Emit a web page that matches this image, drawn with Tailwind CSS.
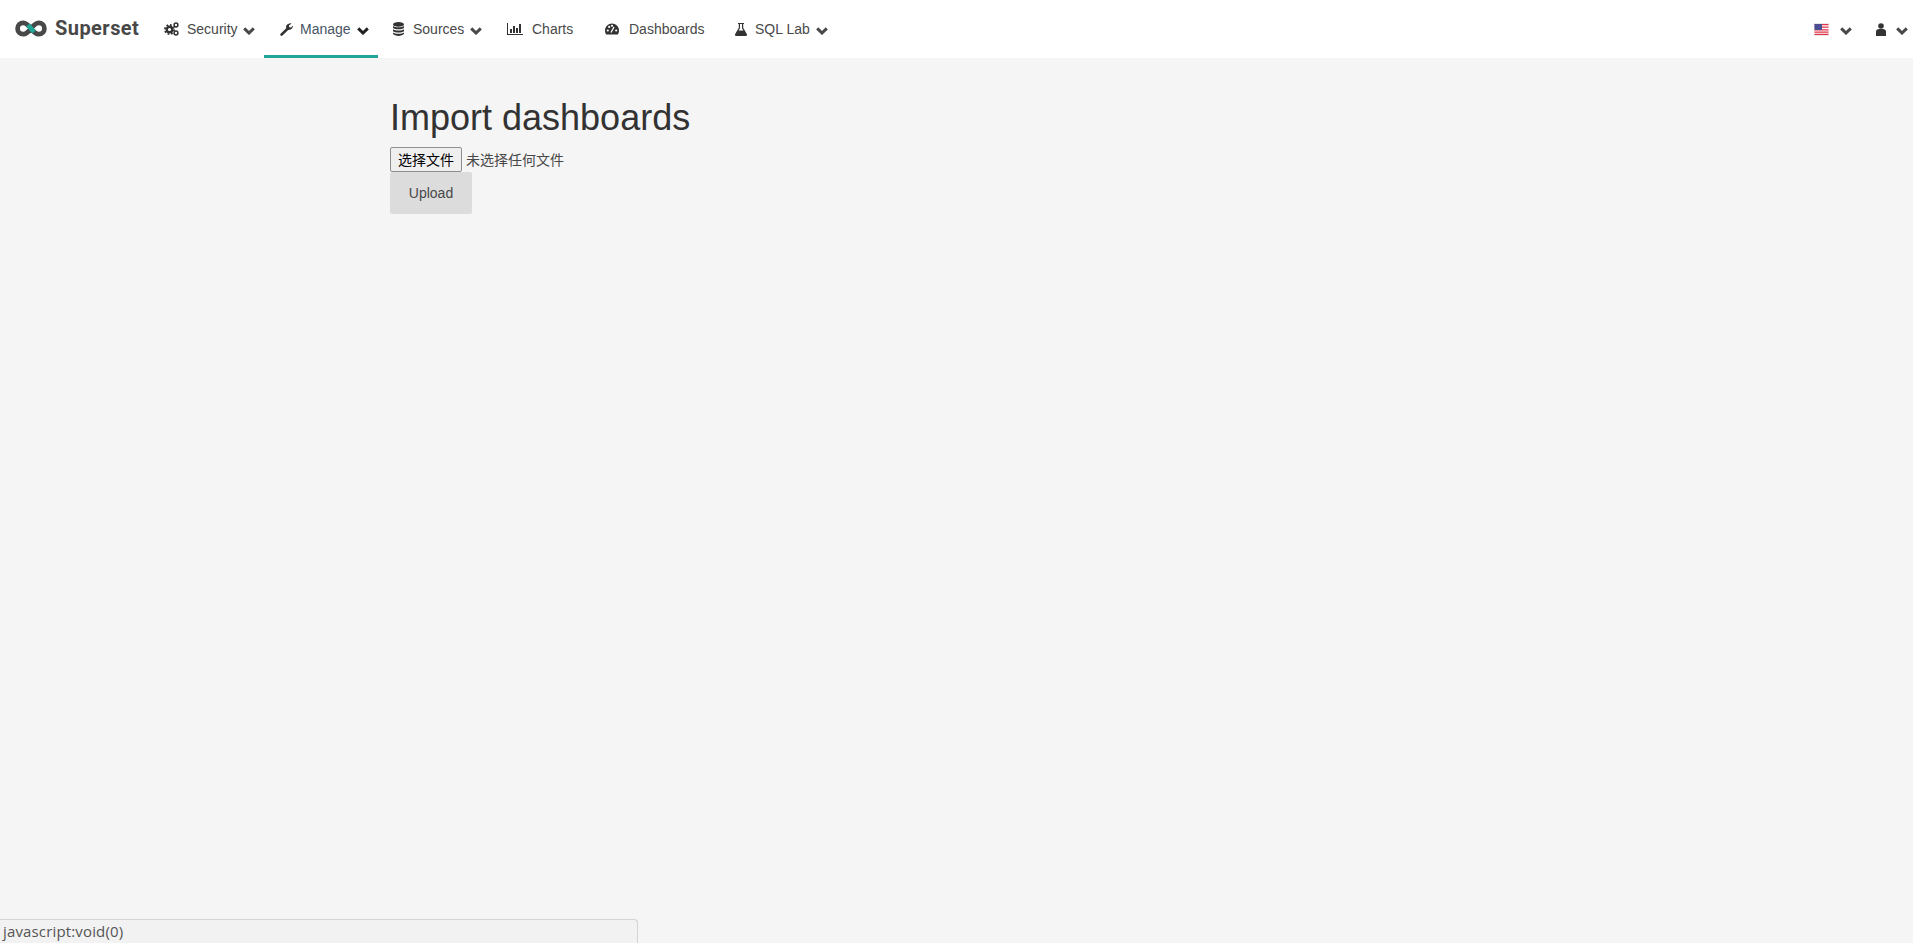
<!DOCTYPE html>
<html lang="en">
<head>
  <meta charset="UTF-8">
  <meta name="viewport" content="width=device-width, initial-scale=1">
  <title>Import dashboards</title>
  <script src="https://cdn.jsdelivr.net/npm/@tailwindcss/browser@4"></script>
</head>
<body class="bg-[#f5f5f5] min-h-screen overflow-hidden text-[#484848] text-sm font-['Liberation_Sans','Noto_Sans_CJK_SC',sans-serif]">

  <!-- navbar -->
  <nav class="h-[58px] bg-white flex items-stretch">
    <a class="w-[149px] flex items-center pl-[15px] gap-[8px] pb-[1px]">
      <svg width="32" height="17" viewBox="0 0 31 16" fill="none">
        <path d="M15.5 8 C12.5 4 10.5 2.5 8 2.5 A5.5 5.5 0 0 0 8 13.5 C10.5 13.5 12.5 12 15.5 8 C18.5 4 20.5 2.5 23 2.5 A5.5 5.5 0 0 1 23 13.5 C20.5 13.5 18.5 12 15.5 8" stroke="#484848" stroke-width="4.6"/>
        <path d="M12.6 4.6 L18.4 11.4" stroke="#1fa697" stroke-width="4.6"/>
      </svg>
      <span class="font-['Roboto'] font-bold text-[20px] tracking-[0.45px] text-[#484848]">Superset</span>
    </a>

    <a class="w-[115px] flex items-center pl-[15px]">
      <svg class="mr-[8px]" width="15" height="14" viewBox="0 0 15 14" fill="none" stroke="#333">
        <circle cx="5.5" cy="7.5" r="2.8" stroke-width="2.4"/>
        <circle cx="5.5" cy="7.5" r="4.6" stroke-width="1.8" stroke-dasharray="1.8 1.8"/>
        <circle cx="12" cy="3" r="1.9" stroke-width="1.5"/>
        <circle cx="12" cy="11" r="1.9" stroke-width="1.5"/>
      </svg>
      <span>Security</span>
      <svg class="ml-[5px] mt-[3px]" width="12" height="8" viewBox="0 0 12 8" fill="none"><path d="M1.2 1.4 L6 6 L10.8 1.4" stroke="#484848" stroke-width="3"/></svg>
    </a>

    <a class="w-[114px] flex items-center pl-[16px] border-b-[3px] border-[#1fa697] pt-[3px]">
      <svg class="mr-[7px]" width="13" height="13" viewBox="0 0 13 13" fill="#333">
        <path d="M0.3 11 L6.2 5.2 C5.6 3 6.6 0.8 9.6 0.4 C10.4 0.3 11 0.4 11.4 0.7 L8.9 2.6 L9.3 4.3 L11 4.6 L12.8 2.4 C13.2 4.8 11.3 7.3 8.2 6.9 L2.2 12.8 C1.4 13.3 -0.3 12 0.3 11 Z"/>
      </svg>
      <span class="text-[#485465]">Manage</span>
      <svg class="ml-[6px] mt-[3px]" width="12" height="8" viewBox="0 0 12 8" fill="none"><path d="M1.2 1.4 L6 6 L10.8 1.4" stroke="#222" stroke-width="3"/></svg>
    </a>

    <a class="w-[113px] flex items-center pl-[15px]">
      <svg class="mr-[9px]" width="11" height="14" viewBox="0 0 11 14" fill="#333">
        <ellipse cx="5.5" cy="2.4" rx="5.5" ry="2.3"/>
        <path d="M0 4 C2 5.8 9 5.8 11 4 V6 C9 7.8 2 7.8 0 6 Z"/>
        <path d="M0 7.2 C2 9 9 9 11 7.2 V9.2 C9 11 2 11 0 9.2 Z"/>
        <path d="M0 10.4 C2 12.2 9 12.2 11 10.4 V11.8 C9 14.6 2 14.6 0 11.8 Z"/>
      </svg>
      <span>Sources</span>
      <svg class="ml-[6px] mt-[3px]" width="12" height="8" viewBox="0 0 12 8" fill="none"><path d="M1.2 1.4 L6 6 L10.8 1.4" stroke="#484848" stroke-width="3"/></svg>
    </a>

    <a class="w-[99px] flex items-center pl-[16px]">
      <svg class="mr-[9px]" width="16" height="12" viewBox="0 0 16 12" fill="#333">
        <path d="M0 0 H1 V11 H16 V12 H0 Z"/>
        <rect x="3" y="6" width="2" height="4"/>
        <rect x="6" y="3" width="2" height="7"/>
        <rect x="9" y="5" width="2" height="5"/>
        <rect x="12" y="1" width="2" height="9"/>
      </svg>
      <span>Charts</span>
    </a>

    <a class="w-[130px] flex items-center pl-[15px]">
      <svg class="mr-[10px]" width="14" height="12" viewBox="0 0 14 12">
        <path d="M7 0.5 A7 7 0 0 1 14 7.5 C14 9 13.5 10.5 12.8 11.5 H1.2 C0.5 10.5 0 9 0 7.5 A7 7 0 0 1 7 0.5 Z" fill="#333"/>
        <circle cx="2.8" cy="7.5" r="1.1" fill="#fff"/>
        <circle cx="4.2" cy="3.9" r="1.1" fill="#fff"/>
        <circle cx="7" cy="2.8" r="1.1" fill="#fff"/>
        <circle cx="11.2" cy="7.5" r="1.1" fill="#fff"/>
        <path d="M6 9.5 L9 4" stroke="#fff" stroke-width="1.3"/>
      </svg>
      <span>Dashboards</span>
    </a>

    <a class="flex items-center pl-[15px]">
      <svg class="mr-[8px]" width="12" height="13" viewBox="0 0 12 13" fill="#333">
        <path d="M3 0 H9 V1 H8.2 V4.8 L11.8 11 C12.3 12 11.7 13 10.6 13 H1.4 C0.3 13 -0.3 12 0.2 11 L3.8 4.8 V1 H3 Z M5 1 V5.2 L3.6 7.6 H8.4 L7 5.2 V1 Z"/>
      </svg>
      <span>SQL Lab</span>
      <svg class="ml-[6px] mt-[3px]" width="12" height="8" viewBox="0 0 12 8" fill="none"><path d="M1.2 1.4 L6 6 L10.8 1.4" stroke="#484848" stroke-width="3"/></svg>
    </a>

    <div class="ml-auto flex items-center pr-[5px]">
      <svg class="mt-[1px]" width="15" height="13" viewBox="0 0 15 13">
        <rect width="15" height="13" fill="#e8e8e8"/>
        <rect x="0.5" y="1" width="14" height="11" fill="#fff"/>
        <path d="M0.5 1.6 H14.5 M0.5 4.2 H14.5 M0.5 6.8 H14.5 M0.5 9.2 H14.5 M0.5 11.4 H14.5" stroke="#e0344a" stroke-width="1.3"/>
        <rect x="0.5" y="1" width="7.5" height="6" fill="#4b4f92"/>
      </svg>
      <svg class="ml-[11px] mt-[3px]" width="12" height="8" viewBox="0 0 12 8" fill="none"><path d="M1.2 1.4 L6 6 L10.8 1.4" stroke="#484848" stroke-width="3"/></svg>
      <svg class="ml-[24px] mt-[1px]" width="10" height="13" viewBox="0 0 10 13" fill="#333">
        <circle cx="5" cy="3" r="2.8"/>
        <path d="M0 13 V8.5 C0 7 1.5 6 3 6 H7 C8.5 6 10 7 10 8.5 V13 Z"/>
      </svg>
      <svg class="ml-[10px] mt-[3px]" width="12" height="8" viewBox="0 0 12 8" fill="none"><path d="M1.2 1.4 L6 6 L10.8 1.4" stroke="#484848" stroke-width="3"/></svg>
    </div>
  </nav>

  <!-- import form -->
  <main class="pl-[390px] pt-[40px]">
    <h1 class="text-[36px] leading-[40px] text-[#323232] mb-[9px]">Import dashboards</h1>
    <div class="flex items-center h-[25px]">
      <button class="w-[72px] h-[25px] bg-[#efefef] border border-[#8f8f8f] rounded-[2px] text-[14px] leading-[20px] text-black">选择文件</button>
      <span class="ml-[4px] text-[14px] text-[#484848]">未选择任何文件</span>
    </div>
    <button class="w-[82px] h-[42px] bg-[#dcdcdc] rounded-[2px] text-[14px] text-[#484848]">Upload</button>
  </main>

  <!-- browser status bubble -->
  <div class="fixed bottom-0 left-0 w-[638px] h-[24px] pl-[3px] bg-[#f2f2f2] border-t border-r border-[#d4d4d4] rounded-tr-[4px] flex items-center font-['Open_Sans'] text-[15px] tracking-[0.15px] text-[#555]">javascript:void(0)</div>

</body>
</html>
